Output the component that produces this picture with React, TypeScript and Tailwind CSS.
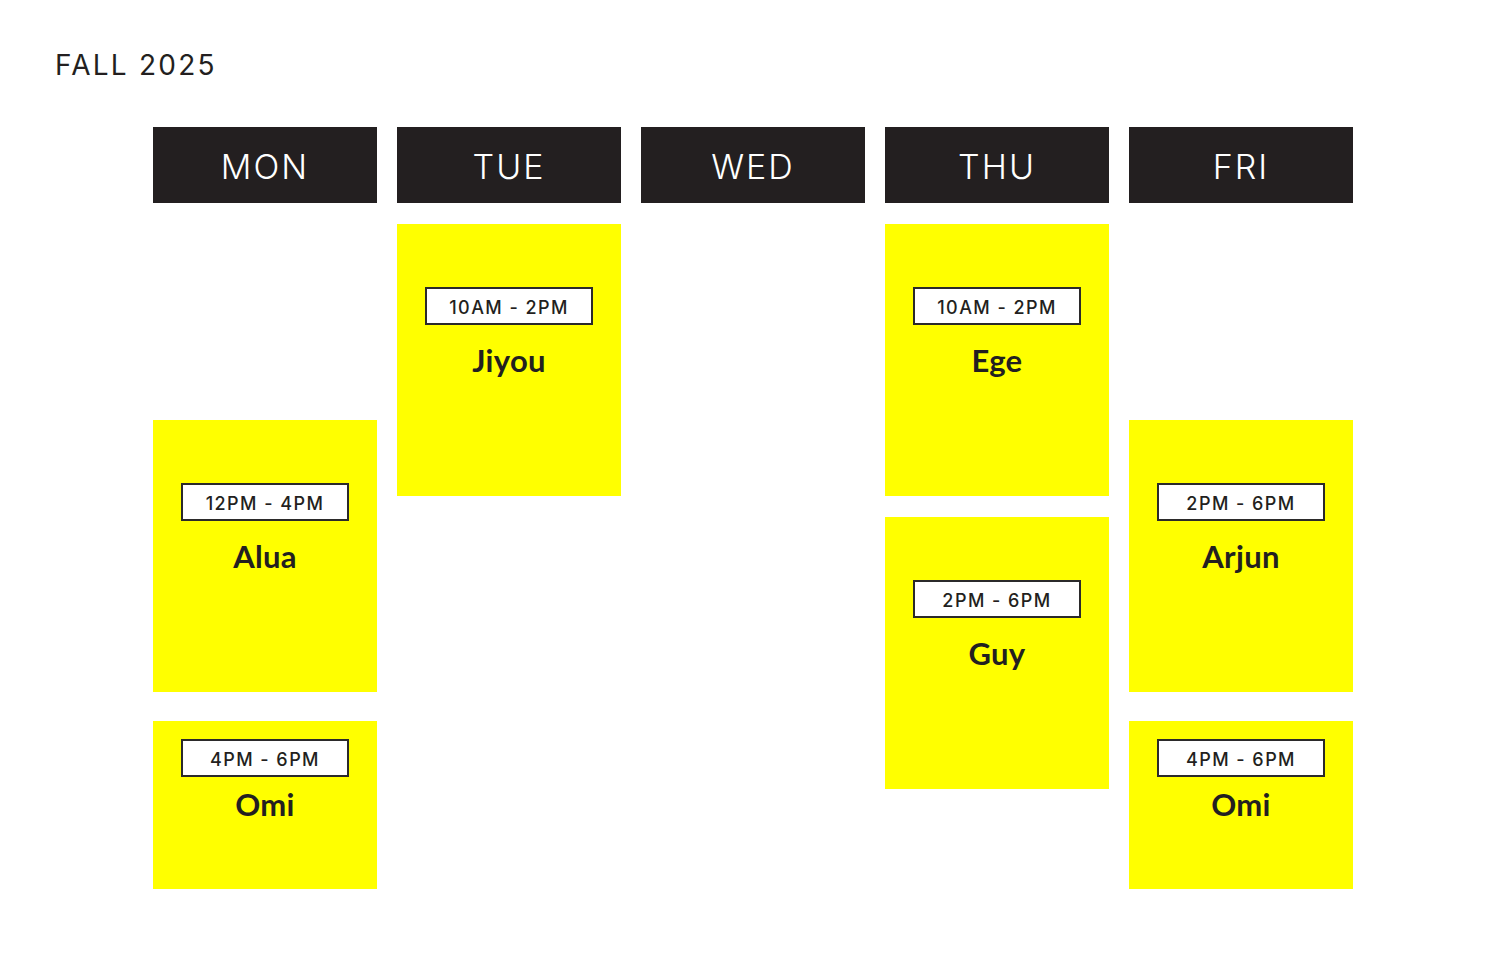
import React from "react"

type Shift = {
    time: string
    name: string
    mt: number
    h: number
    badgeTop: number
    nameGap: number
}

const columns: { day: string; shifts: Shift[] }[] = [
    {
        day: "MON",
        shifts: [
            { time: "12PM - 4PM", name: "Alua", mt: 196, h: 272, badgeTop: 63, nameGap: 16 },
            { time: "4PM - 6PM", name: "Omi", mt: 29, h: 168, badgeTop: 18, nameGap: 8 },
        ],
    },
    {
        day: "TUE",
        shifts: [{ time: "10AM - 2PM", name: "Jiyou", mt: 0, h: 272, badgeTop: 63, nameGap: 16 }],
    },
    { day: "WED", shifts: [] },
    {
        day: "THU",
        shifts: [
            { time: "10AM - 2PM", name: "Ege", mt: 0, h: 272, badgeTop: 63, nameGap: 16 },
            { time: "2PM - 6PM", name: "Guy", mt: 21, h: 272, badgeTop: 63, nameGap: 16 },
        ],
    },
    {
        day: "FRI",
        shifts: [
            { time: "2PM - 6PM", name: "Arjun", mt: 196, h: 272, badgeTop: 63, nameGap: 16 },
            { time: "4PM - 6PM", name: "Omi", mt: 29, h: 168, badgeTop: 18, nameGap: 8 },
        ],
    },
]

const ShiftCard = ({ shift }: { shift: Shift }) => {
    return (
        <div
            className="bg-[#ffff00] flex flex-col items-center"
            style={{ marginTop: shift.mt, height: shift.h, paddingTop: shift.badgeTop }}
        >
            <div className="w-[168px] h-[38px] pt-[3px] border-2 border-[#2b2a2a] bg-white flex items-center justify-center font-['Inter',sans-serif] font-medium text-[18px] tracking-[0.08em] text-[#231f20]">
                {shift.time}
            </div>
            <div
                className="font-['Lato',sans-serif] font-bold text-[31px] leading-[38px] tracking-[0.01em] text-[#231f20]"
                style={{ marginTop: shift.nameGap }}
            >
                {shift.name}
            </div>
        </div>
    )
}

export default function App() {
    return (
        <div className="min-h-[974px] w-[1506px] bg-white">
            <div className="pt-[46px] pl-[55px] font-['Inter',sans-serif] text-[28px] leading-[38px] tracking-[0.08em] text-[#231f20]">
                FALL 2025
            </div>
            <div className="mt-[43px] ml-[153px] grid grid-cols-[repeat(5,224px)] gap-x-[20px]">
                {columns.map((col) => (
                    <div key={col.day} className="flex flex-col">
                        <div className="h-[76px] pt-[3px] bg-[#231f20] flex items-center justify-center font-['Inter',sans-serif] font-light text-[34px] tracking-[0.06em] text-white">
                            {col.day}
                        </div>
                        <div className="flex flex-col pt-[21px]">
                            {col.shifts.map((s, i) => (
                                <ShiftCard key={i} shift={s} />
                            ))}
                        </div>
                    </div>
                ))}
            </div>
        </div>
    )
}
